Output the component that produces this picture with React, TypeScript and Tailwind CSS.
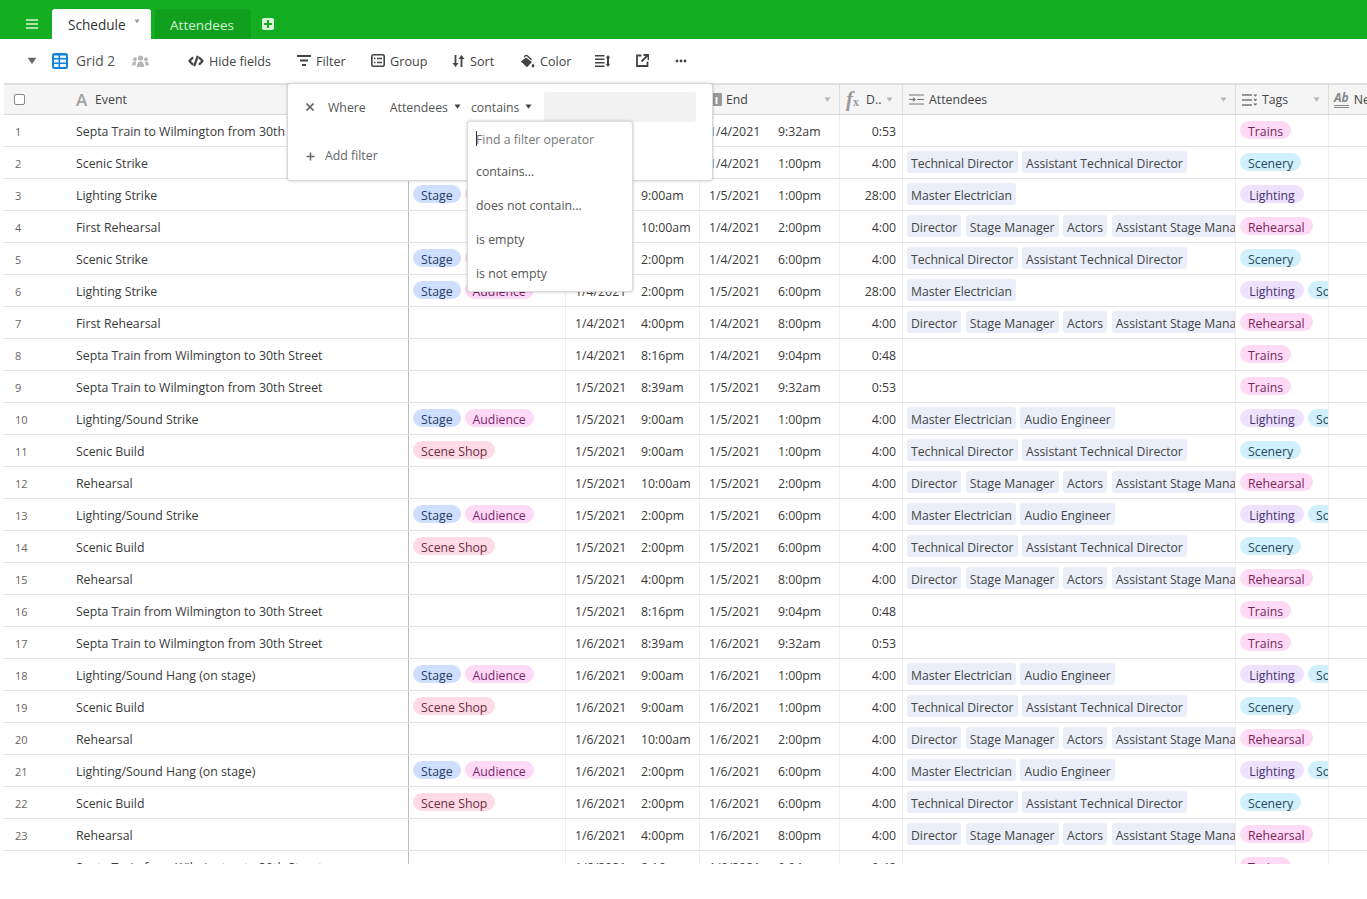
import React from "react";

const TAG: Record<string, string> = {
  Trains: "bg-[#ffdaf6] text-[#6b2a5c]",
  Scenery: "bg-[#d0f0fd] text-[#1d4a5e]",
  Lighting: "bg-[#ede2fe] text-[#4a3070] min-w-[64px] text-center",
  Rehearsal: "bg-[#ffdaf6] text-[#7a1f5c]",
  Sound: "bg-[#d0f0fd] text-[#1d4a5e]",
  Stage: "bg-[#cfdfff] text-[#27385f]",
  Audience: "bg-[#ffdaf6] text-[#7a1f6c]",
  "Scene Shop": "bg-[#ffdce5] text-[#6e2b3e]",
};

const TD = ["Technical Director", "Assistant Technical Director"];
const ME = ["Master Electrician"];
const MA = ["Master Electrician", "Audio Engineer"];
const DR = ["Director", "Stage Manager", "Actors", "Assistant Stage Manager"];
const SA = ["Stage", "Audience"];
const SS = ["Scene Shop"];

type Row = [string, string[], string, string, string, string, string, string[], string[]];

const rows: Row[] = [
  ["Septa Train to Wilmington from 30th Street", [], "1/4/2021", "8:39am", "1/4/2021", "9:32am", "0:53", [], ["Trains"]],
  ["Scenic Strike", SS, "1/4/2021", "9:00am", "1/4/2021", "1:00pm", "4:00", TD, ["Scenery"]],
  ["Lighting Strike", SA, "1/4/2021", "9:00am", "1/5/2021", "1:00pm", "28:00", ME, ["Lighting"]],
  ["First Rehearsal", [], "1/4/2021", "10:00am", "1/4/2021", "2:00pm", "4:00", DR, ["Rehearsal"]],
  ["Scenic Strike", SA, "1/4/2021", "2:00pm", "1/4/2021", "6:00pm", "4:00", TD, ["Scenery"]],
  ["Lighting Strike", SA, "1/4/2021", "2:00pm", "1/5/2021", "6:00pm", "28:00", ME, ["Lighting", "Sound"]],
  ["First Rehearsal", [], "1/4/2021", "4:00pm", "1/4/2021", "8:00pm", "4:00", DR, ["Rehearsal"]],
  ["Septa Train from Wilmington to 30th Street", [], "1/4/2021", "8:16pm", "1/4/2021", "9:04pm", "0:48", [], ["Trains"]],
  ["Septa Train to Wilmington from 30th Street", [], "1/5/2021", "8:39am", "1/5/2021", "9:32am", "0:53", [], ["Trains"]],
  ["Lighting/Sound Strike", SA, "1/5/2021", "9:00am", "1/5/2021", "1:00pm", "4:00", MA, ["Lighting", "Sound"]],
  ["Scenic Build", SS, "1/5/2021", "9:00am", "1/5/2021", "1:00pm", "4:00", TD, ["Scenery"]],
  ["Rehearsal", [], "1/5/2021", "10:00am", "1/5/2021", "2:00pm", "4:00", DR, ["Rehearsal"]],
  ["Lighting/Sound Strike", SA, "1/5/2021", "2:00pm", "1/5/2021", "6:00pm", "4:00", MA, ["Lighting", "Sound"]],
  ["Scenic Build", SS, "1/5/2021", "2:00pm", "1/5/2021", "6:00pm", "4:00", TD, ["Scenery"]],
  ["Rehearsal", [], "1/5/2021", "4:00pm", "1/5/2021", "8:00pm", "4:00", DR, ["Rehearsal"]],
  ["Septa Train from Wilmington to 30th Street", [], "1/5/2021", "8:16pm", "1/5/2021", "9:04pm", "0:48", [], ["Trains"]],
  ["Septa Train to Wilmington from 30th Street", [], "1/6/2021", "8:39am", "1/6/2021", "9:32am", "0:53", [], ["Trains"]],
  ["Lighting/Sound Hang (on stage)", SA, "1/6/2021", "9:00am", "1/6/2021", "1:00pm", "4:00", MA, ["Lighting", "Sound"]],
  ["Scenic Build", SS, "1/6/2021", "9:00am", "1/6/2021", "1:00pm", "4:00", TD, ["Scenery"]],
  ["Rehearsal", [], "1/6/2021", "10:00am", "1/6/2021", "2:00pm", "4:00", DR, ["Rehearsal"]],
  ["Lighting/Sound Hang (on stage)", SA, "1/6/2021", "2:00pm", "1/6/2021", "6:00pm", "4:00", MA, ["Lighting", "Sound"]],
  ["Scenic Build", SS, "1/6/2021", "2:00pm", "1/6/2021", "6:00pm", "4:00", TD, ["Scenery"]],
  ["Rehearsal", [], "1/6/2021", "4:00pm", "1/6/2021", "8:00pm", "4:00", DR, ["Rehearsal"]],
  ["Septa Train from Wilmington to 30th Street", [], "1/6/2021", "8:16pm", "1/6/2021", "9:04pm", "0:48", [], ["Trains"]],
];

const Caret = ({ c = "text-[#333]", s = 8 }: { c?: string; s?: number }) => (
  <svg width={s} height={s * 0.75} viewBox="0 0 8 6" className={c}>
    <path d="M0.5 0.5h7L4 5.5z" fill="currentColor" />
  </svg>
);

function Pill({ t }: { t: string }) {
  return (
    <span className={`shrink-0 h-[18px] leading-[22px] px-[8px] rounded-full overflow-hidden ${TAG[t]}`}>{t}</span>
  );
}

function ToolBtn({ icon, label, w }: { icon: React.ReactNode; label: string; w: string }) {
  return (
    <div className={`flex items-center gap-[5px] ${w}`}>
      {icon}
      <span className="text-[#444] pt-[2px]">{label}</span>
    </div>
  );
}

const G = "#444";

function HeaderCell({ w, icon, label, caret = true }: { w: string; icon: React.ReactNode; label: string; caret?: boolean }) {
  return (
    <div className={`${w} shrink-0 flex items-center pl-[6px] pr-[8px] overflow-hidden border-r border-[#dedede]`}>
      <span className="w-[17px] shrink-0 flex items-center">{icon}</span>
      <span className="ml-[3px] pt-[1px] text-[#444] whitespace-nowrap">{label}</span>
      {caret && <span className="ml-auto"><Caret c="text-[#b8b8b8]" s={7} /></span>}
    </div>
  );
}

export default function App() {
  return (
    <div className="w-[1367px] h-[899px] bg-white overflow-hidden text-[12.3px] relative" style={{ fontFamily: '"Open Sans", sans-serif' }}>
      {/* Tab bar */}
      <div className="h-[39px] bg-[#13ae21] flex items-end pl-[4px]">
        <div className="w-[48px] h-full flex items-center justify-center pt-[9px] pl-[8px]">
          <svg width="12" height="10" viewBox="0 0 12 10" fill="none" stroke="#d9f3db" strokeWidth="1.6">
            <path d="M0 1h12M0 5h12M0 9h12" />
          </svg>
        </div>
        <div className="w-[99px] h-[30px] bg-white rounded-t-[3px] flex items-center pl-[16px] pt-[2px] text-[13.6px] font-medium text-[#333]">
          Schedule
          <span className="ml-[8px] mb-[7px]"><Caret c="text-[#999]" s={6} /></span>
        </div>
        <div className="ml-[4px] w-[96px] h-[30px] bg-[#11a01e] rounded-t-[3px] flex items-center justify-center pt-[2px] pr-[2px] text-[13.5px] text-[#d6f2d8]">
          Attendees
        </div>
        <div className="ml-[11px] mb-[9px] w-[12px] h-[12px] rounded-[2px] bg-[#d8f3da] flex items-center justify-center">
          <svg width="8" height="8" viewBox="0 0 8 8" stroke="#13ae21" strokeWidth="2"><path d="M4 0v8M0 4h8" /></svg>
        </div>
      </div>

      {/* Toolbar */}
      <div className="h-[44px] flex items-center pl-[27px] text-[12.6px]">
        <Caret c="text-[#666]" s={10} />
        <svg width="16" height="16" viewBox="0 0 16 16" className="ml-[15px]">
          <rect width="16" height="16" rx="2.500" fill="#1283da" />
          <path d="M2 2.500h4.500v2.500H2zM8 2.500h6v2.500H8zM2 6.500h4.500v3H2zM8 6.500h6v3H8zM2 11h4.500v3H2zM8 11h6v3H8z" fill="#eaf5fd" />
        </svg>
        <span className="ml-[8px] pt-[1px] text-[13.8px] text-[#555]">Grid 2</span>
        <svg width="17" height="13" viewBox="0 0 17 13" fill="#b5b5b5" className="ml-[17px]">
          <circle cx="8.5" cy="3" r="2.6" /><circle cx="3" cy="4.2" r="1.9" /><circle cx="14" cy="4.2" r="1.9" />
          <path d="M4.8 12c0-3.6 1.5-5.5 3.700-5.500s3.700 1.900 3.700 5.500zM0 10.500c0-2.500 1-4 3-4 .6 0 1 .1 1.300.3C3.700 8 3.600 9.200 3.600 10.500zM17 10.500c0-2.500-1-4-3-4-.6 0-1 .1-1.300.3.600 1.200.700 2.400.700 3.700z" />
        </svg>
        <div className="ml-[39px] flex items-center">
          <ToolBtn w="w-[109px]" label="Hide fields" icon={
            <svg width="16" height="12" viewBox="0 0 16 12" fill="none" stroke={G} strokeWidth="2.200">
              <path d="M5 2.200L1.500 6 5 9.800M11 2.200L14.500 6 11 9.800M9.800 .8L6.200 11.200" />
            </svg>} />
          <ToolBtn w="w-[74px]" label="Filter" icon={
            <svg width="14" height="11" viewBox="0 0 14 11" fill="none" stroke={G} strokeWidth="2">
              <path d="M0 1h14M3 5.500h8M5 10h4" />
            </svg>} />
          <ToolBtn w="w-[81px]" label="Group" icon={
            <svg width="14" height="13" viewBox="0 0 14 13" fill="none" stroke={G} strokeWidth="1.600">
              <rect x="0.800" y="0.800" width="12.400" height="11.400" rx="1.500" />
              <path d="M3 4.500h1.500M6 4.500h5M3 8.500h1.500M6 8.500h5" />
            </svg>} />
          <ToolBtn w="w-[68px]" label="Sort" icon={
            <svg width="13" height="12" viewBox="0 0 13 12" fill={G}>
              <path d="M2.600 0h1.800v8h2.100L3.500 12 .5 8h2.100zM8.600 12h1.800V4h2.100L9.500 0l-3 4h2.100z" />
            </svg>} />
          <ToolBtn w="w-[75px]" label="Color" icon={
            <svg width="15" height="14" viewBox="0 0 15 14" fill={G}>
              <path d="M6 3.500L12 8l-5 5.200L.8 7.500zM3.800 3C4.200 1 6.500.2 8 1.500L12 5.200l-1 1L7 2.500C6 1.800 5 2.300 5 3.600z" />
              <path d="M13 9.500c.9 1.200 1.400 1.900 1.400 2.600a1.400 1.400 0 01-2.800 0c0-.7.500-1.400 1.400-2.600z" />
            </svg>} />
          <svg width="15" height="12" viewBox="0 0 15 12" fill="none" stroke={G} strokeWidth="1.400" className="w-[15px]">
            <path d="M0 .8h9.500M0 4.200h9.500M0 7.800h9.500M0 11.200h9.500" />
            <path d="M13 1v10" strokeWidth="2" />
            <path d="M11.200 3L13 .5 14.800 3zM11.200 9L13 11.500 14.800 9z" fill={G} strokeWidth="0.500" />
          </svg>
          <svg width="13" height="13" viewBox="0 0 13 13" fill="none" stroke={G} strokeWidth="1.800" className="ml-[26px]">
            <path d="M5.500 1.500H1v10.500h10.500V7.500" /><path d="M5.500 7.500L11.500 1.500M7.500 1h5v5" />
          </svg>
          <svg width="12" height="4" viewBox="0 0 12 4" fill={G} className="ml-[26px]">
            <circle cx="2" cy="2" r="1.400" /><circle cx="6" cy="2" r="1.400" /><circle cx="10" cy="2" r="1.400" />
          </svg>
        </div>
      </div>

      {/* Grid */}
      <div className="ml-[4px] h-[781px] overflow-hidden">
        <div className="h-[32px] bg-[#f5f5f5] border-t-2 border-t-[#dedede] border-b border-b-[#d8d8d8] flex">
          <div className="w-[64px] shrink-0 flex items-center pl-[10px]">
            <div className="w-[11px] h-[11px] rounded-[2px] border border-[#888] bg-white" />
          </div>
          <div className="w-[341px] shrink-0 flex items-center pl-[8px] border-r border-[#bdbdbd]">
            <span className="w-[14px] text-[17px] font-semibold text-[#a0a0a0] leading-none">A</span>
            <span className="ml-[5px] pt-[1px] text-[#444]">Event</span>
          </div>
          <HeaderCell w="w-[157px]" icon={null} label="" />
          <HeaderCell w="w-[134px]" icon={null} label="" />
          <HeaderCell w="w-[140px]" label="End" icon={
            <svg width="11" height="13" viewBox="0 0 11 13" className="ml-[5px]">
              <rect width="11" height="13" rx="1" fill="#999" />
              <rect x="4.500" y="4" width="2" height="7" fill="#f5f5f5" />
            </svg>} />
          <div className="w-[63px] shrink-0 flex items-center pl-[6px] border-r border-[#dedede]">
            <span className="text-[21px] italic font-bold text-[#999] leading-none" style={{ fontFamily: '"Liberation Serif", serif' }}>f<span className="text-[12px] not-italic">x</span></span>
            <span className="ml-[7px] pt-[1px] text-[#444]">D..</span>
            <span className="ml-[5px]"><Caret c="text-[#b8b8b8]" s={7} /></span>
          </div>
          <HeaderCell w="w-[333px]" label="Attendees" icon={
            <svg width="15" height="11" viewBox="0 0 15 11" fill="none" stroke="#777" strokeWidth="1.200">
              <path d="M0 1h15M8 5.500h7M0 10h15M0 5.500h6M4 3.700l2 1.800-2 1.800" />
            </svg>} />
          <HeaderCell w="w-[93px]" label="Tags" icon={
            <svg width="15" height="12" viewBox="0 0 15 12" fill="none" stroke="#777" strokeWidth="1.300">
              <path d="M0 1h10M0 6h10M0 11h10M12 0.500l1.300 1.300 1.300-1.300M12 5l1.300 1.300L14.600 5M12 9.500l1.300 1.300 1.300-1.300" />
            </svg>} />
          <div className="flex-1 flex items-center pl-[5px] overflow-hidden">
            <span className="text-[#888] text-[12px] font-bold italic leading-none border-b-[3px] border-double border-[#888] pb-[1px] mr-[5px]">Ab</span>
            <span className="pt-[1px] text-[#444]">Ne</span>
          </div>
        </div>
        {rows.map((r, i) => (
          <div key={i} className="h-[32px] border-b border-[#e3e3e3] flex items-center text-[#3a3a3a]">
            <div className="w-[64px] shrink-0 pl-[11px] pt-[4px] text-[11px] text-[#666]">{i + 1}</div>
            <div className="w-[341px] shrink-0 h-full flex items-center pl-[8px] pt-[4px] border-r border-[#bdbdbd] whitespace-nowrap overflow-hidden">{r[0]}</div>
            <div className="w-[157px] shrink-0 h-full flex items-start gap-[4px] pl-[4px] pt-[6px] border-r border-[#efefef] overflow-hidden">
              {r[1].map((t) => <Pill key={t} t={t} />)}
            </div>
            <div className="w-[134px] shrink-0 h-full flex items-center pl-[9px] pt-[4px] border-r border-[#efefef]">
              <span className="w-[66px]">{r[2]}</span><span>{r[3]}</span>
            </div>
            <div className="w-[140px] shrink-0 h-full flex items-center pl-[9px] pt-[4px] border-r border-[#efefef]">
              <span className="w-[69px]">{r[4]}</span><span>{r[5]}</span>
            </div>
            <div className="w-[63px] shrink-0 h-full flex items-center justify-end pr-[6px] pt-[4px] border-r border-[#efefef]">{r[6]}</div>
            <div className="w-[333px] shrink-0 h-full flex items-start gap-[4.5px] pl-[4px] pt-[4px] border-r border-[#efefef] overflow-hidden">
              {r[7].map((t) => (
                <span key={t} className="shrink-0 h-[22px] leading-[25px] text-[12.2px] px-[4px] rounded-[3px] bg-[#e9eef9] text-[#444] overflow-hidden">{t}</span>
              ))}
            </div>
            <div className="w-[93px] shrink-0 h-full flex items-start gap-[4px] pl-[4px] pt-[6px] border-r border-[#efefef] overflow-hidden">
              {r[8].map((t) => <Pill key={t} t={t} />)}
            </div>
            <div className="flex-1" />
          </div>
        ))}
      </div>

      {/* Filter popover */}
      <div className="absolute left-[287px] top-[83px] w-[426px] h-[98px] bg-white border border-[#d8d8d8] rounded-[3px] shadow-[0_0_3px_rgba(0,0,0,0.2)] text-[#555]">
        <div className="flex items-center h-[30px] mt-[8px] pl-[18px]">
          <svg width="8" height="8" viewBox="0 0 8 8" stroke="#666" strokeWidth="1.600"><path d="M0.500 0.500l7 7M7.500 0.500l-7 7" /></svg>
          <span className="ml-[14px] pt-[3px]">Where</span>
          <span className="ml-[24px] pt-[3px]">Attendees</span>
          <span className="ml-[6px]"><Caret c="text-[#444]" s={7} /></span>
          <span className="ml-[10px] pt-[3px]">contains</span>
          <span className="ml-[6px]"><Caret c="text-[#444]" s={7} /></span>
          <div className="ml-[12px] w-[152px] h-[30px] rounded-[3px] bg-[#f2f2f2]" />
        </div>
        <div className="flex items-center mt-[25px] pl-[18px] text-[#666]">
          <svg width="9" height="9" viewBox="0 0 9 9" stroke="#666" strokeWidth="1.500"><path d="M4.500 0.500v8M0.500 4.500h8" /></svg>
          <span className="ml-[10px]">Add filter</span>
        </div>
      </div>

      {/* Operator dropdown */}
      <div className="absolute left-[467px] top-[121px] w-[166px] h-[171px] bg-white border border-[#dcdcdc] rounded-[3px] shadow-[0_0_3px_rgba(0,0,0,0.25)] text-[#555] pl-[8px]">
        <div className="h-[34px] flex items-center pt-[2px] text-[#777] relative">
          <span className="absolute left-0 top-[9px] w-px h-[15px] bg-[#333]" />
          Find a filter operator
        </div>
        <div className="h-[32px] flex items-center">contains...</div>
        <div className="h-[34px] flex items-center pt-[2px]">does not contain...</div>
        <div className="h-[34px] flex items-center pt-[2px]">is empty</div>
        <div className="h-[34px] flex items-center pt-[2px]">is not empty</div>
      </div>
    </div>
  );
}
